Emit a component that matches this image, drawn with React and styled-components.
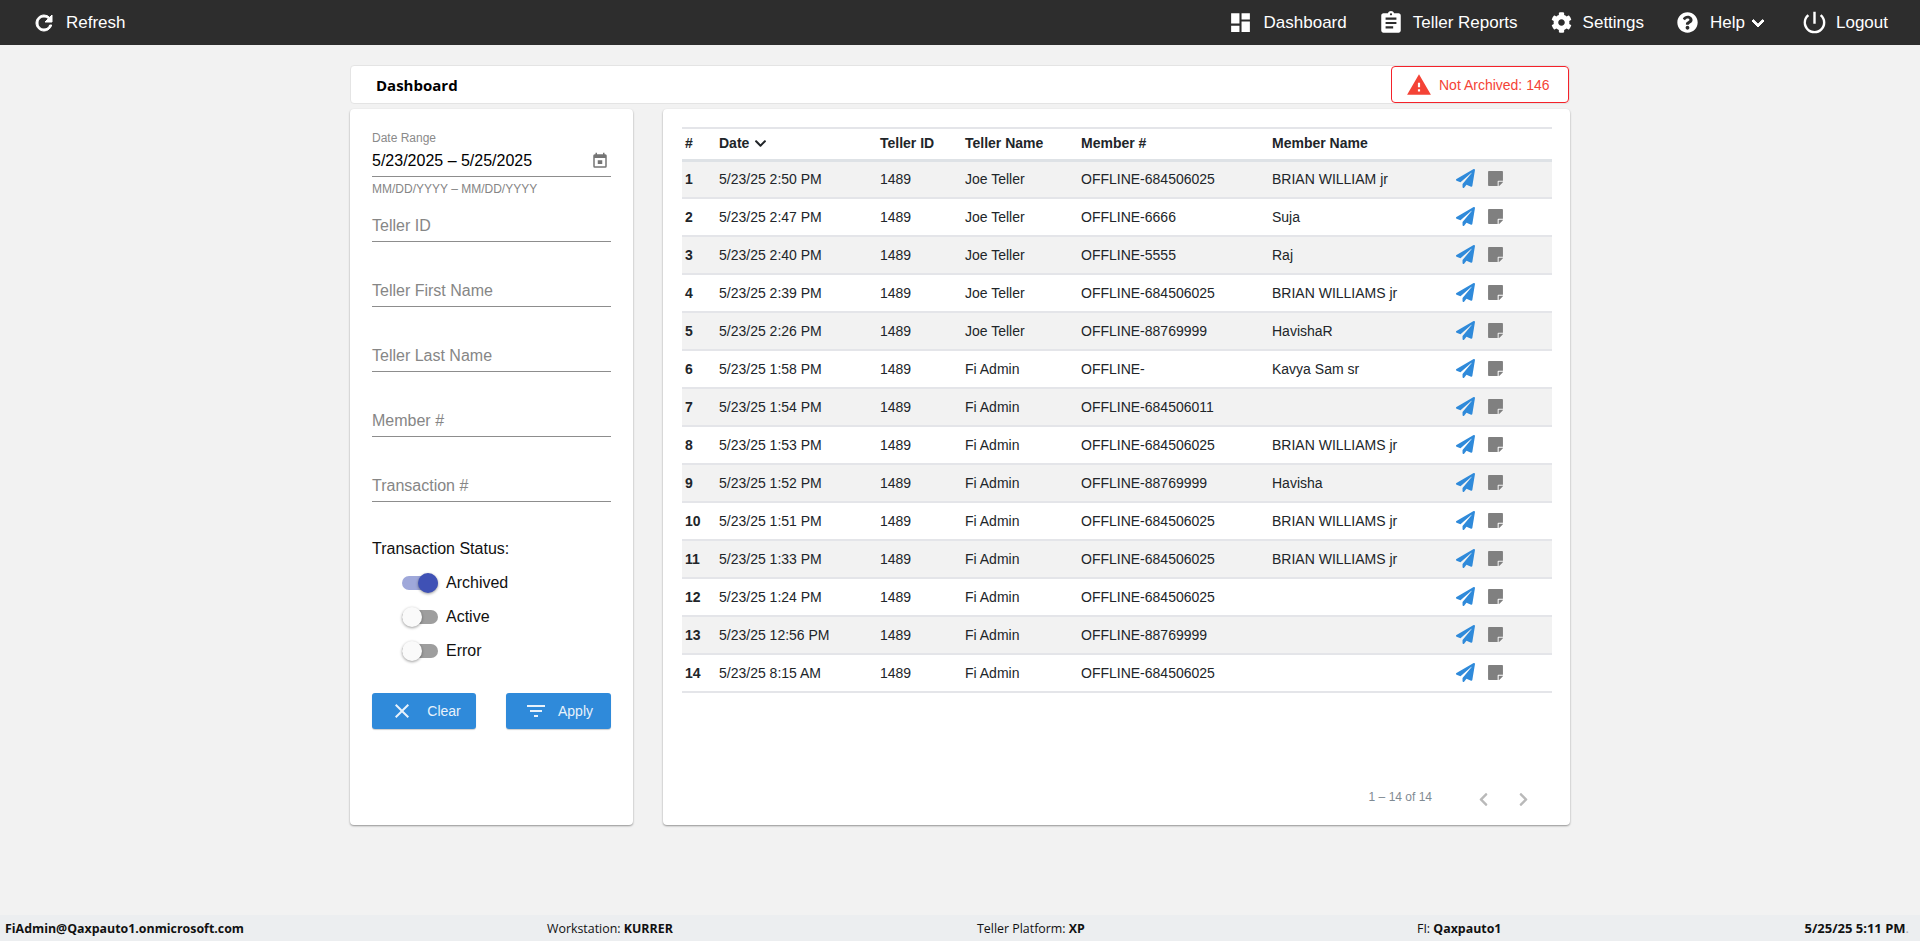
import React from 'react'
import styled, { createGlobalStyle } from 'styled-components'
import { FaPaperPlane, FaStickyNote, FaChevronDown, FaCog, FaQuestionCircle, FaChevronLeft, FaChevronRight } from 'react-icons/fa'
import {
  MdRefresh,
  MdDashboard,
  MdAssignment,
  MdKeyboardArrowDown,
  MdPowerSettingsNew,
  MdWarning,
  MdClose,
  MdFilterList
} from 'react-icons/md'

const GlobalStyle = createGlobalStyle`
  html, body {
    margin: 0;
    padding: 0;
    background: #f2f2f2;
    font-family: "Liberation Sans", Arial, sans-serif;
  }
  * {
    box-sizing: border-box;
  }
`

const Page = styled.div`
  height: 941px;
  display: flex;
  flex-direction: column;
  overflow: hidden;
`

const TopBar = styled.header`
  height: 45px;
  flex: none;
  background: #2d2d2d;
  color: #fff;
  display: flex;
  align-items: center;
  justify-content: space-between;
  padding: 0 32px;
`

const NavGroup = styled.nav`
  display: flex;
  align-items: center;
  gap: 33px;
`

const NavItem = styled.div`
  display: flex;
  align-items: center;
  gap: ${(p) => p.$gap}px;
  margin-right: ${(p) => p.$trail || 0}px;
  font-size: 17px;
  svg {
    flex: none;
  }
`

const HelpArrow = styled(MdKeyboardArrowDown)`
  margin: 0 -3px 0 -11px;
  path:not([fill='none']) {
    stroke: currentColor;
    stroke-width: 1;
  }
`

const RefreshIcon = styled(MdRefresh)`
  path:not([fill='none']) {
    stroke: currentColor;
    stroke-width: 1;
  }
`

const Content = styled.main`
  width: 1220px;
  margin: 20px 0 0 350px;
`

const TitleBar = styled.div`
  height: 39px;
  background: #fff;
  border: 1px solid #e4e4e4;
  border-radius: 4px;
  display: flex;
  align-items: center;
  justify-content: space-between;
  padding-left: 25px;
`

const Title = styled.h1`
  margin: 0;
  font-family: "Open Sans", sans-serif;
  font-size: 15px;
  font-weight: 700;
  color: #000;
`

const AlertBox = styled.div`
  width: 178px;
  height: 37px;
  border: 1px solid #f4222a;
  border-radius: 4px;
  background: #fff;
  display: flex;
  align-items: center;
  gap: 7px;
  padding-left: 14px;
  color: #f44336;
  font-size: 14px;
`

const Columns = styled.div`
  display: flex;
  gap: 30px;
  margin-top: 5px;
`

const Card = styled.section`
  background: #fff;
  border-radius: 4px;
  height: 716px;
  box-shadow: 0 1px 2px rgba(0, 0, 0, 0.4);
`

const FilterCard = styled(Card)`
  width: 283px;
  flex: none;
  padding: 22px 22px 0;
`

const TableCard = styled(Card)`
  flex: 1;
  min-width: 0;
  padding: 18px 18px 0 19px;
  display: flex;
  flex-direction: column;
`

const SmallLabel = styled.div`
  font-size: 12px;
  line-height: 14px;
  color: #8a8a8a;
`

const DateRow = styled.div`
  height: 32px;
  display: flex;
  align-items: center;
  justify-content: space-between;
  border-bottom: 1px solid #8d8d8d;
  padding-right: 2px;
  font-size: 16px;
  color: #000;
  svg {
    fill: #757575;
    margin-top: 1px;
  }
`

const Helper = styled.div`
  font-size: 12px;
  line-height: 14px;
  margin-top: 5px;
  color: #858585;
`

const TextField = styled.div`
  height: 31px;
  margin-top: ${(p) => (p.$first ? '15px' : '34px')};
  padding-top: 5px;
  border-bottom: 1px solid #8d8d8d;
  font-size: 16px;
  line-height: 20px;
  color: #868686;
`

const StatusTitle = styled.div`
  margin-top: 38px;
  font-size: 16px;
  line-height: 18px;
  color: #111;
`

const SwitchList = styled.div`
  margin: 15px 0 0 30px;
  display: flex;
  flex-direction: column;
  gap: 14px;
`

const SwitchRow = styled.div`
  height: 20px;
  display: flex;
  align-items: center;
  gap: 8px;
  font-size: 16px;
  color: #111;
`

const Track = styled.span`
  width: 36px;
  height: 14px;
  border-radius: 7px;
  background: ${(p) => (p.$on ? '#9fa8da' : '#9e9e9e')};
  position: relative;
  display: block;
`

const Thumb = styled.span`
  position: absolute;
  top: -3px;
  left: ${(p) => (p.$on ? '16px' : '0')};
  width: 20px;
  height: 20px;
  border-radius: 50%;
  background: ${(p) => (p.$on ? '#3f51b5' : '#fafafa')};
  box-shadow: 0 1px 3px rgba(0, 0, 0, 0.4);
`

const ButtonRow = styled.div`
  margin-top: 32px;
  display: flex;
  justify-content: space-between;
`

const ActionButton = styled.button`
  width: ${(p) => p.$width}px;
  height: 36px;
  border: none;
  border-radius: 3px;
  background: #2f8ada;
  color: #e8f2fb;
  font-family: inherit;
  font-size: 14px;
  display: flex;
  align-items: center;
  justify-content: center;
  gap: ${(p) => p.$gap}px;
  padding: 0 0 0 ${(p) => p.$shift}px;
  box-shadow: 0 1px 1px rgba(0, 0, 0, 0.2);
`

const Table = styled.table`
  width: 870px;
  table-layout: fixed;
  border-collapse: collapse;
  border-top: 2px solid #e4e5e9;
  font-size: 14px;
  color: #212529;
`

const HeadCell = styled.th`
  height: 32px;
  padding: 0 0 2px ${(p) => (p.$first ? '3px' : '0')};
  text-align: left;
  font-weight: 700;
  border-bottom: 3px solid #dee2e6;
  svg {
    margin-left: 5px;
    vertical-align: -2px;
  }
`

const Row = styled.tr`
  height: 38px;
  background: ${(p) => (p.$odd ? '#f2f2f2' : '#fff')};
  border-bottom: 2px solid #e4e5e9;
`

const Cell = styled.td`
  padding: 0;
  white-space: nowrap;
`

const IndexCell = styled(Cell)`
  font-weight: 700;
  padding-left: 3px;
`

const ActionWrap = styled.div`
  display: flex;
  align-items: center;
  gap: 12px;
  padding: 0 0 1px 8px;
`

const PlaneIcon = styled(FaPaperPlane)`
  color: #2f8ada;
  font-size: 19px;
`

const NoteIcon = styled(FaStickyNote)`
  color: #808080;
  font-size: 17px;
`

const Pager = styled.div`
  margin-top: auto;
  height: 40px;
  display: flex;
  align-items: flex-start;
  justify-content: flex-end;
  gap: 30px;
  padding-right: 26px;
  color: #b9b9b9;
`

const PagerText = styled.span`
  font-size: 12px;
  line-height: 14px;
  margin-right: 14px;
  margin-top: 5px;
  color: #7f8a93;
`

const PagerArrow = styled.span`
  width: 10px;
  margin-top: 7px;
  font-size: 15px;
  display: block;
`

const Footer = styled.footer`
  margin-top: auto;
  height: 26px;
  flex: none;
  background: #eceef0;
  font-family: "Open Sans", sans-serif;
  font-size: 12.4px;
  color: #111;
  display: grid;
  grid-template-columns: 542px 430px 440px 373px 1fr;
  align-items: center;
  padding: 0 11px 0 5px;
  white-space: nowrap;
`

const FooterEnd = styled.b`
  text-align: right;
  font-size: 13px;
`

const FaintDot = styled.span`
  color: #aaa;
  font-weight: 400;
`

function CalendarIcon() {
  return (
    <svg width='18' height='18' viewBox='0 0 24 24'>
      <path
        fillRule='evenodd'
        d='M5 3h1V1h2v2h8V1h2v2h1a2 2 0 0 1 2 2v14a2 2 0 0 1-2 2H5a2 2 0 0 1-2-2V5a2 2 0 0 1 2-2zm0 5v11h14V8z'
      />
      <path d='M9 11h6v5H9z' />
    </svg>
  )
}

const filters = ['Teller ID', 'Teller First Name', 'Teller Last Name', 'Member #', 'Transaction #']

const statuses = [
  { label: 'Archived', on: true },
  { label: 'Active', on: false },
  { label: 'Error', on: false }
]

const navItems = [
  { label: 'Dashboard', gap: 11, trail: -2, icon: <MdDashboard size={25} /> },
  { label: 'Teller Reports', gap: 9, icon: <MdAssignment size={26} /> },
  { label: 'Settings', gap: 11, icon: <FaCog size={21} /> },
  { label: 'Help', gap: 12, icon: <FaQuestionCircle size={21} />, arrow: true },
  { label: 'Logout', gap: 7, icon: <MdPowerSettingsNew size={29} /> }
]

const rows = [
  ['5/23/25 2:50 PM', 'Joe Teller', 'OFFLINE-684506025', 'BRIAN WILLIAM jr'],
  ['5/23/25 2:47 PM', 'Joe Teller', 'OFFLINE-6666', 'Suja'],
  ['5/23/25 2:40 PM', 'Joe Teller', 'OFFLINE-5555', 'Raj'],
  ['5/23/25 2:39 PM', 'Joe Teller', 'OFFLINE-684506025', 'BRIAN WILLIAMS jr'],
  ['5/23/25 2:26 PM', 'Joe Teller', 'OFFLINE-88769999', 'HavishaR'],
  ['5/23/25 1:58 PM', 'Fi Admin', 'OFFLINE-', 'Kavya Sam sr'],
  ['5/23/25 1:54 PM', 'Fi Admin', 'OFFLINE-684506011', ''],
  ['5/23/25 1:53 PM', 'Fi Admin', 'OFFLINE-684506025', 'BRIAN WILLIAMS jr'],
  ['5/23/25 1:52 PM', 'Fi Admin', 'OFFLINE-88769999', 'Havisha'],
  ['5/23/25 1:51 PM', 'Fi Admin', 'OFFLINE-684506025', 'BRIAN WILLIAMS jr'],
  ['5/23/25 1:33 PM', 'Fi Admin', 'OFFLINE-684506025', 'BRIAN WILLIAMS jr'],
  ['5/23/25 1:24 PM', 'Fi Admin', 'OFFLINE-684506025', ''],
  ['5/23/25 12:56 PM', 'Fi Admin', 'OFFLINE-88769999', ''],
  ['5/23/25 8:15 AM', 'Fi Admin', 'OFFLINE-684506025', '']
]

function App() {
  return (
    <Page>
      <GlobalStyle />
      <TopBar>
        <NavItem $gap={10}>
          <RefreshIcon size={24} />
          Refresh
        </NavItem>
        <NavGroup>
          {navItems.map((item) => (
            <NavItem key={item.label} $gap={item.gap} $trail={item.trail}>
              {item.icon}
              {item.label}
              {item.arrow && <HelpArrow size={24} />}
            </NavItem>
          ))}
        </NavGroup>
      </TopBar>

      <Content>
        <TitleBar>
          <Title>Dashboard</Title>
          <AlertBox>
            <MdWarning size={26} />
            Not Archived: 146
          </AlertBox>
        </TitleBar>

        <Columns>
          <FilterCard>
            <SmallLabel>Date Range</SmallLabel>
            <DateRow>
              5/23/2025 – 5/25/2025
              <CalendarIcon />
            </DateRow>
            <Helper>MM/DD/YYYY – MM/DD/YYYY</Helper>
            {filters.map((name, i) => (
              <TextField key={name} $first={i === 0}>
                {name}
              </TextField>
            ))}
            <StatusTitle>Transaction Status:</StatusTitle>
            <SwitchList>
              {statuses.map((s) => (
                <SwitchRow key={s.label}>
                  <Track $on={s.on}>
                    <Thumb $on={s.on} />
                  </Track>
                  {s.label}
                </SwitchRow>
              ))}
            </SwitchList>
            <ButtonRow>
              <ActionButton $width={104} $gap={13} $shift={3}>
                <MdClose size={24} />
                Clear
              </ActionButton>
              <ActionButton $width={105} $gap={10} $shift={0}>
                <MdFilterList size={24} />
                Apply
              </ActionButton>
            </ButtonRow>
          </FilterCard>

          <TableCard>
            <Table>
              <colgroup>
                <col style={{ width: 37 }} />
                <col style={{ width: 161 }} />
                <col style={{ width: 85 }} />
                <col style={{ width: 116 }} />
                <col style={{ width: 191 }} />
                <col style={{ width: 176 }} />
                <col />
              </colgroup>
              <thead>
                <tr>
                  <HeadCell $first>#</HeadCell>
                  <HeadCell>
                    Date
                    <FaChevronDown size={13} />
                  </HeadCell>
                  <HeadCell>Teller ID</HeadCell>
                  <HeadCell>Teller Name</HeadCell>
                  <HeadCell>Member #</HeadCell>
                  <HeadCell>Member Name</HeadCell>
                  <HeadCell />
                </tr>
              </thead>
              <tbody>
                {rows.map((row, i) => (
                  <Row key={row[0]} $odd={i % 2 === 0}>
                    <IndexCell>{i + 1}</IndexCell>
                    <Cell>{row[0]}</Cell>
                    <Cell>1489</Cell>
                    <Cell>{row[1]}</Cell>
                    <Cell>{row[2]}</Cell>
                    <Cell>{row[3]}</Cell>
                    <Cell>
                      <ActionWrap>
                        <PlaneIcon />
                        <NoteIcon />
                      </ActionWrap>
                    </Cell>
                  </Row>
                ))}
              </tbody>
            </Table>
            <Pager>
              <PagerText>1 – 14 of 14</PagerText>
              <PagerArrow>
                <FaChevronLeft />
              </PagerArrow>
              <PagerArrow>
                <FaChevronRight />
              </PagerArrow>
            </Pager>
          </TableCard>
        </Columns>
      </Content>

      <Footer>
        <b>FiAdmin@Qaxpauto1.onmicrosoft.com</b>
        <span>
          Workstation: <b>KURRER</b>
        </span>
        <span>
          Teller Platform: <b>XP</b>
        </span>
        <span>
          FI: <b>Qaxpauto1</b>
        </span>
        <FooterEnd>
          5/25/25 5:11 PM<FaintDot>.</FaintDot>
        </FooterEnd>
      </Footer>
    </Page>
  )
}

export default App
